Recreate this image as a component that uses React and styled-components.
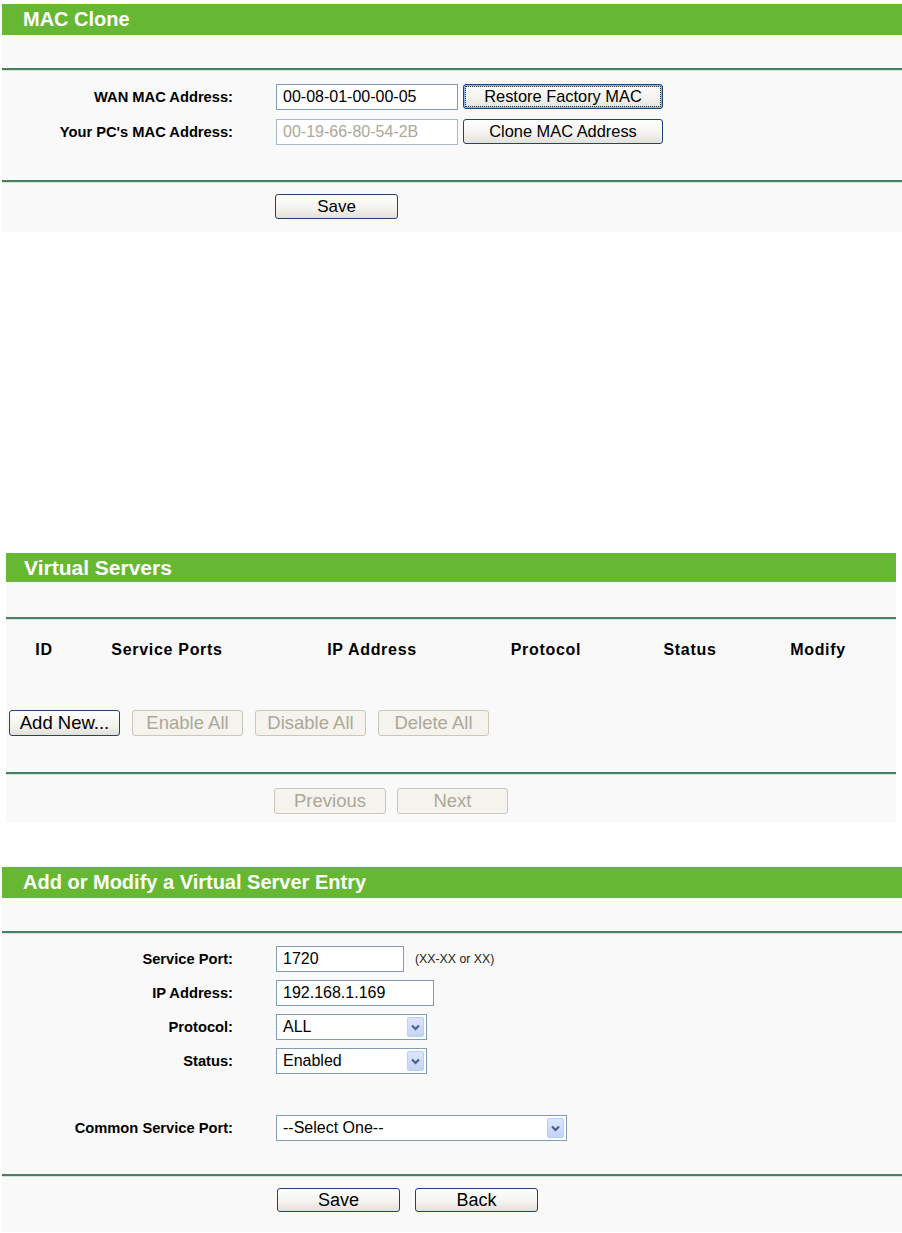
import React from 'react';
import styled, { createGlobalStyle, css } from 'styled-components';

const GlobalStyle = createGlobalStyle`
	body {
		margin: 0;
		background: #fff;
		font-family: "Liberation Sans", Arial, sans-serif;
		color: #000;
	}
`;

const Page = styled.div`
		display: flex;
		flex-direction: column;
		width: 902px;
	`,
	Panel = styled.section`
		margin-top: ${( p ) => p.$top}px;
		margin-left: ${( p ) => p.$left}px;
		width: ${( p ) => p.$width}px;
		background: #f9f9f9;
		display: flex;
		flex-direction: column;
	`,
	TitleBar = styled.h2`
		margin: 0;
		height: ${( p ) => p.$h}px;
		line-height: ${( p ) => p.$h}px;
		padding-left: ${( p ) => p.$pad}px;
		background: #66b833;
		color: #fff;
		font-size: ${( p ) => p.$size}px;
		font-weight: bold;
	`,
	Spacer = styled.div`
		height: ${( p ) => p.$h}px;
	`,
	Divider = styled.hr`
		margin: 0;
		border: 0;
		height: 2px;
		background: #4a7f62;
		box-shadow: 0 1px 0 #d4e6da;
	`,
	FormBody = styled.div`
		display: flex;
		flex-direction: column;
		padding: ${( p ) => p.$pt}px 0 ${( p ) => p.$pb}px;
	`,
	FormRow = styled.div`
		display: grid;
		grid-template-columns: 231px auto;
		column-gap: 43px;
		align-items: center;
		height: ${( p ) => p.$h || 34}px;
	`,
	Label = styled.label`
		text-align: right;
		font-size: 14.7px;
		font-weight: bold;
		white-space: nowrap;
	`,
	Field = styled.div`
		display: flex;
		align-items: center;
		gap: ${( p ) => p.$gap || 5}px;
	`,
	TextInput = styled.input`
		box-sizing: border-box;
		width: ${( p ) => p.$w}px;
		height: 26px;
		margin: 0;
		padding: 0 6px;
		border: 1px solid #7f9db9;
		background: #fff;
		font-family: "Liberation Sans", Arial, sans-serif;
		font-size: 16px;
		color: #000;
		outline: none;
		&:disabled {
			color: #aca899;
			border-color: #a9b8c8;
		}
	`,
	Hint = styled.span`
		font-size: 12.3px;
		color: #222;
		margin-left: 3px;
	`,
	Button = styled.button`
		box-sizing: border-box;
		width: ${( p ) => p.$w}px;
		height: ${( p ) => p.$h || 25}px;
		margin: 0;
		padding: 0;
		border: 1px solid #1d4378;
		border-radius: 3px;
		background: linear-gradient( #ffffff, #f3f2ee 60%, #e3e0d7 );
		font-family: "Liberation Sans", Arial, sans-serif;
		font-size: ${( p ) => p.$size || 16.4}px;
		color: #000;
		display: flex;
		align-items: center;
		justify-content: center;
		${( p ) => p.$focused && css`
			box-shadow: inset 0 0 0 1px #8cb4ec, inset 0 0 0 2px #c4d8f6;
		`}
		&:disabled {
			border-color: #cac8bb;
			background: #f4f3ee;
			color: #aca899;
		}
	`,
	FocusRing = styled.span`
		border: 1px dotted #333;
		padding: 1px 18px 1px;
		line-height: 17px;
	`,
	SelectBox = styled.div`
		box-sizing: border-box;
		width: ${( p ) => p.$w}px;
		height: 26px;
		border: 1px solid #7f9db9;
		background: #fff;
		display: flex;
		align-items: center;
		justify-content: space-between;
		padding: 0 2px 0 6px;
		font-size: 16px;
	`,
	ArrowBox = styled.span`
		width: 17px;
		height: 20px;
		border-radius: 2px;
		background: linear-gradient( #dce7fc, #c1d3f7 );
		border: 1px solid #bccdf0;
		box-sizing: border-box;
		display: flex;
		align-items: center;
		justify-content: center;
	`,
	ButtonBar = styled.div`
		display: flex;
		align-items: center;
		gap: ${( p ) => p.$gap}px;
		padding: ${( p ) => p.$pt}px 0 ${( p ) => p.$pb}px ${( p ) => p.$pl}px;
	`,
	ColumnHeader = styled.div`
		display: grid;
		grid-template-columns: 76px 170px 240px 108px 180px 76px 1fr;
		align-items: center;
		height: 58px;
		margin-top: 2px;
	`,
	ColumnTitle = styled.span`
		text-align: center;
		font-size: 16px;
		font-weight: bold;
		letter-spacing: 0.7px;
		white-space: nowrap;
	`;

const Select = ( { value, width } ) => (
	<SelectBox $w={width}>
		<span>{value}</span>
		<ArrowBox>
			<svg width='9' height='7' viewBox='0 0 9 7'>
				<path d='M1 1.5 L4.5 5 L8 1.5' fill='none' stroke='#4d5f86' strokeWidth='2.2' />
			</svg>
		</ArrowBox>
	</SelectBox>
);

const columns = [ 'ID', 'Service Ports', 'IP Address', 'Protocol', 'Status', 'Modify' ];

const App = () => {
	return (
		<Page>
			<GlobalStyle />

			{/* MAC Clone */}
			<Panel $top={4} $left={2} $width={900}>
				<TitleBar $h={31} $pad={21} $size={20}>MAC Clone</TitleBar>
				<Spacer $h={33} />
				<Divider />
				<FormBody $pt={9} $pb={31}>
					<FormRow $h={35}>
						<Label>WAN MAC Address:</Label>
						<Field>
							<TextInput $w={182} value='00-08-01-00-00-05' readOnly />
							<Button $w={200} $focused><FocusRing>Restore Factory MAC</FocusRing></Button>
						</Field>
					</FormRow>
					<FormRow $h={35}>
						<Label>Your PC's MAC Address:</Label>
						<Field>
							<TextInput $w={182} value='00-19-66-80-54-2B' disabled readOnly />
							<Button $w={200}>Clone MAC Address</Button>
						</Field>
					</FormRow>
				</FormBody>
				<Divider />
				<ButtonBar $pt={12} $pb={13} $pl={273} $gap={15}>
					<Button $w={123} $size={17}>Save</Button>
				</ButtonBar>
			</Panel>

			{/* Virtual Servers */}
			<Panel $top={321} $left={6} $width={890}>
				<TitleBar $h={29} $pad={18} $size={21}>Virtual Servers</TitleBar>
				<Spacer $h={35} />
				<Divider />
				<ColumnHeader>
					{columns.map( ( c ) => <ColumnTitle key={c}>{c}</ColumnTitle> )}
				</ColumnHeader>
				<ButtonBar $pt={31} $pb={36} $pl={3} $gap={12}>
					<Button $w={111} $h={26} $size={18.5}>Add New...</Button>
					<Button $w={111} $h={26} $size={18.5} disabled>Enable All</Button>
					<Button $w={111} $h={26} $size={18.5} disabled>Disable All</Button>
					<Button $w={111} $h={26} $size={18.5} disabled>Delete All</Button>
				</ButtonBar>
				<Divider />
				<ButtonBar $pt={14} $pb={8} $pl={268} $gap={11}>
					<Button $w={112} $h={26} $size={18.5} disabled>Previous</Button>
					<Button $w={111} $h={26} $size={18.5} disabled>Next</Button>
				</ButtonBar>
			</Panel>

			{/* Add or Modify a Virtual Server Entry */}
			<Panel $top={45} $left={2} $width={900}>
				<TitleBar $h={31} $pad={21} $size={20}>Add or Modify a Virtual Server Entry</TitleBar>
				<Spacer $h={33} />
				<Divider />
				<FormBody $pt={9} $pb={29}>
					<FormRow>
						<Label>Service Port:</Label>
						<Field $gap={8}>
							<TextInput $w={128} value='1720' readOnly />
							<Hint>(XX-XX or XX)</Hint>
						</Field>
					</FormRow>
					<FormRow>
						<Label>IP Address:</Label>
						<Field>
							<TextInput $w={158} value='192.168.1.169' readOnly />
						</Field>
					</FormRow>
					<FormRow>
						<Label>Protocol:</Label>
						<Field><Select value='ALL' width={151} /></Field>
					</FormRow>
					<FormRow>
						<Label>Status:</Label>
						<Field><Select value='Enabled' width={151} /></Field>
					</FormRow>
					<Spacer $h={33} />
					<FormRow>
						<Label>Common Service Port:</Label>
						<Field><Select value='--Select One--' width={291} /></Field>
					</FormRow>
				</FormBody>
				<Divider />
				<ButtonBar $pt={12} $pb={20} $pl={275} $gap={15}>
					<Button $w={123} $h={24} $size={18}>Save</Button>
					<Button $w={123} $h={24} $size={18}>Back</Button>
				</ButtonBar>
			</Panel>
		</Page>
	);
};

export default App;
